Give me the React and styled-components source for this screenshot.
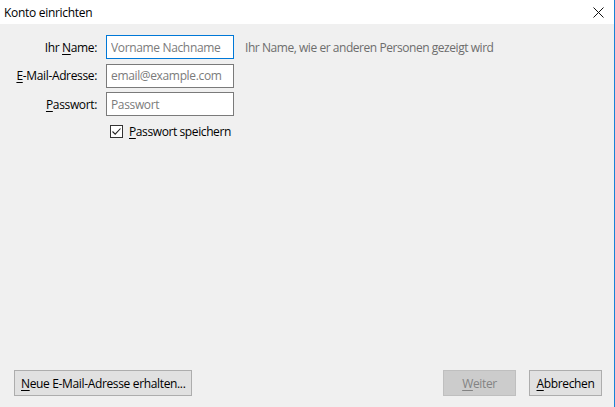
import React from "react";
import styled, { createGlobalStyle } from "styled-components";

const GlobalStyle = createGlobalStyle`
  html, body {
    margin: 0;
    padding: 0;
  }
  body {
    font-family: "Open Sans", "Noto Sans", sans-serif;
    font-size: 12px;
    color: #000;
    background: #f0f0f0;
  }
`;

const Window = styled.div`
  width: 615px;
  height: 407px;
  box-sizing: border-box;
  border-right: 1px solid #1883d7;
  background: #f0f0f0;
  display: flex;
  flex-direction: column;
`;

const TitleBar = styled.div`
  height: 24px;
  background: #fff;
  display: flex;
  align-items: center;
  justify-content: space-between;
  padding: 0 10px 0 4px;
  flex-shrink: 0;
`;

const Title = styled.span`
  font-size: 12px;
  letter-spacing: -0.3px;
`;

const Content = styled.div`
  flex: 1;
  display: flex;
  flex-direction: column;
  justify-content: space-between;
  padding: 11px 12px 11px 14px;
`;

const Form = styled.div`
  display: grid;
  grid-template-columns: 83px 128px auto;
  column-gap: 9px;
  row-gap: 4.5px;
  align-items: center;
`;

const Label = styled.label`
  text-align: right;
  white-space: nowrap;
  letter-spacing: -0.35px;
`;

const Input = styled.input`
  box-sizing: border-box;
  width: 128px;
  height: 24px;
  border: 1px solid ${(p) => (p.$focused ? "#0078d7" : "#7a7a7a")};
  background: #fff;
  padding: 0 4px;
  font-family: inherit;
  font-size: 12px;
  outline: none;
  &::placeholder {
    color: #7b7b7b;
    letter-spacing: -0.35px;
  }
`;

const Hint = styled.span`
  color: #6d6d6d;
  white-space: nowrap;
  letter-spacing: -0.45px;
  padding-left: 2px;
`;

const CheckRow = styled.div`
  grid-column: 2 / 4;
  display: flex;
  align-items: center;
  gap: 6px;
  padding: 2px 0 0 4px;
  letter-spacing: -0.4px;
`;

const Box = styled.span`
  width: 13px;
  height: 13px;
  box-sizing: border-box;
  border: 1px solid #333;
  background: #fff;
  display: flex;
  align-items: center;
  justify-content: center;
`;

const Footer = styled.div`
  display: flex;
  align-items: center;
`;

const Spacer = styled.div`
  flex: 1;
`;

const Button = styled.button`
  box-sizing: border-box;
  height: 26px;
  min-width: ${(p) => (p.$wide ? "auto" : "73px")};
  padding: 0 ${(p) => (p.$wide ? "6px" : "4px")};
  margin-left: ${(p) => (p.$gap ? "13px" : "0")};
  font-family: inherit;
  font-size: 12px;
  letter-spacing: -0.35px;
  border: 1px solid ${(p) => (p.disabled ? "#bfbfbf" : "#adadad")};
  background: ${(p) => (p.disabled ? "#cccccc" : "#e1e1e1")};
  color: ${(p) => (p.disabled ? "#838383" : "#000")};
`;

const Key = styled.u`
  text-underline-offset: 2px;
`;

const App = () => {
  return (
    <>
      <GlobalStyle />
      <Window>
        <TitleBar>
          <Title>Konto einrichten</Title>
          <svg width="11" height="11" viewBox="0 0 11 11">
            <path d="M0.5 0.5 L10.5 10.5 M10.5 0.5 L0.5 10.5" stroke="#111" strokeWidth="1" />
          </svg>
        </TitleBar>
        <Content>
          <Form>
            <Label>
              Ihr <Key>N</Key>ame:
            </Label>
            <Input $focused placeholder="Vorname Nachname" />
            <Hint>Ihr Name, wie er anderen Personen gezeigt wird</Hint>

            <Label>
              <Key>E</Key>-Mail-Adresse:
            </Label>
            <Input placeholder="email@example.com" />
            <span />

            <Label>
              <Key>P</Key>asswort:
            </Label>
            <Input placeholder="Passwort" />
            <span />

            <CheckRow>
              <Box>
                <svg width="11" height="11" viewBox="0 0 11 11">
                  <path d="M1.5 5.5 L4.2 8.2 L9.5 2.5" fill="none" stroke="#222" strokeWidth="1.1" />
                </svg>
              </Box>
              <span>
                <Key>P</Key>asswort speichern
              </span>
            </CheckRow>
          </Form>
          <Footer>
            <Button $wide>
              <Key>N</Key>eue E-Mail-Adresse erhalten...
            </Button>
            <Spacer />
            <Button disabled>
              <Key>W</Key>eiter
            </Button>
            <Button $gap>
              <Key>A</Key>bbrechen
            </Button>
          </Footer>
        </Content>
      </Window>
    </>
  );
};

export default App;
